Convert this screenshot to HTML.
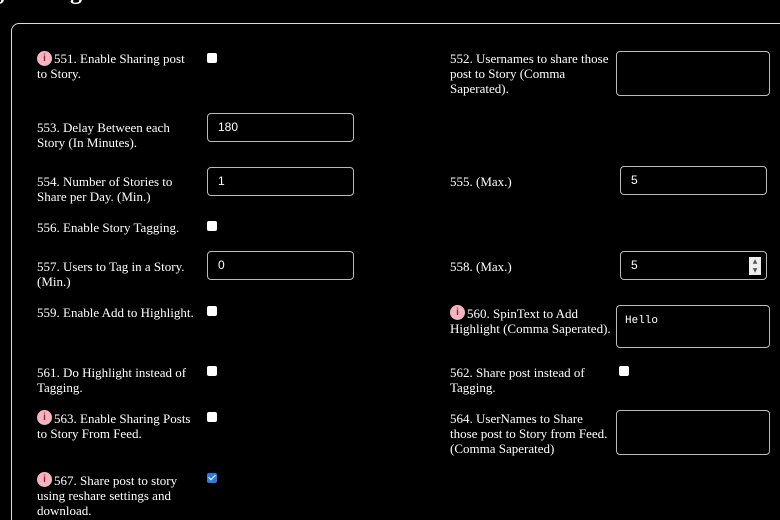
<!DOCTYPE html>
<html style="overflow:hidden;width:780px;height:520px"><head><style>
body{margin:0;width:780px;height:520px;background:#000;overflow:hidden;position:relative;font-family:"Liberation Serif",serif;font-size:13px;color:#fff;line-height:15px}
.a{position:absolute}
h2{position:absolute;left:-8px;top:-22px;margin:0;font-size:24px;font-weight:bold;line-height:28px}
.frame{position:absolute;left:11px;top:23px;width:790px;height:520px;border:1px solid #ddd;border-radius:8px}
.cb{position:absolute;width:10px;height:10px;background:#fff;border-radius:2px}
.cb.on{background:#2a7be4}
.cb.on::after{content:"";position:absolute;left:3px;top:0px;width:3px;height:6px;border:solid #fff;border-width:0 1.5px 1.5px 0;transform:rotate(45deg)}
.in{position:absolute;border:1px solid #bbb;border-radius:4px;box-sizing:border-box;font-family:"Liberation Sans",sans-serif;font-size:12px;padding:0 10px;line-height:27px}
.ta{position:absolute;border:1px solid #bbb;border-radius:4px;box-sizing:border-box;font-family:"Liberation Mono",monospace;font-size:11px;padding:8px 8px}
.i{position:absolute;width:15px;height:15px;border-radius:50%;background:#f4b4c0;color:#a0213a;font:bold 10px/15px "Liberation Sans",sans-serif;text-align:center;z-index:2}
.sp{position:absolute;right:5px;top:5px;width:12px;height:18px;background:#eee;color:#555;font-size:6px;line-height:9px;text-align:center;font-family:"DejaVu Sans",sans-serif}
</style></head><body>
<h2>g Settings</h2>
<div class="frame"></div>

<div class="i" style="left:37px;top:51px">i</div>
<div class="a" style="left:37px;top:51px;width:160px;text-indent:17px">551. Enable Sharing post to Story.</div>
<div class="cb" style="left:207px;top:53px"></div>
<div class="a" style="left:450px;top:51px;width:162px">552. Usernames to share those post to Story (Comma Saperated).</div>
<div class="ta" style="left:616px;top:51px;width:154px;height:45px"></div>

<div class="a" style="left:37px;top:120px;width:160px">553. Delay Between each Story (In Minutes).</div>
<div class="in" style="left:207px;top:113px;width:147px;height:29px">180</div>

<div class="a" style="left:37px;top:174px;width:160px">554. Number of Stories to Share per Day. (Min.)</div>
<div class="in" style="left:207px;top:167px;width:147px;height:29px">1</div>
<div class="a" style="left:450px;top:174px">555. (Max.)</div>
<div class="in" style="left:620px;top:166px;width:147px;height:29px">5</div>

<div class="a" style="left:37px;top:220px">556. Enable Story Tagging.</div>
<div class="cb" style="left:207px;top:221px"></div>

<div class="a" style="left:37px;top:259px;width:160px">557. Users to Tag in a Story. (Min.)</div>
<div class="in" style="left:207px;top:251px;width:147px;height:29px">0</div>
<div class="a" style="left:450px;top:259px">558. (Max.)</div>
<div class="in" style="left:620px;top:251px;width:147px;height:29px">5<div class="sp">▲<br>▼</div></div>

<div class="a" style="left:37px;top:305px">559. Enable Add to Highlight.</div>
<div class="cb" style="left:207px;top:306px"></div>
<div class="i" style="left:450px;top:305px">i</div>
<div class="a" style="left:450px;top:306px;width:162px;text-indent:17px">560. SpinText to Add Highlight (Comma Saperated).</div>
<div class="ta" style="left:616px;top:305px;width:154px;height:43px">Hello</div>

<div class="a" style="left:37px;top:365px;width:160px">561. Do Highlight instead of Tagging.</div>
<div class="cb" style="left:207px;top:366px"></div>
<div class="a" style="left:450px;top:365px;width:160px">562. Share post instead of Tagging.</div>
<div class="cb" style="left:619px;top:366px"></div>

<div class="i" style="left:37px;top:410px">i</div>
<div class="a" style="left:37px;top:411px;width:165px;text-indent:17px">563. Enable Sharing Posts to Story From Feed.</div>
<div class="cb" style="left:207px;top:412px"></div>
<div class="a" style="left:450px;top:411px;width:158px">564. UserNames to Share those post to Story from Feed. (Comma Saperated)</div>
<div class="ta" style="left:616px;top:410px;width:154px;height:45px"></div>

<div class="i" style="left:37px;top:472px">i</div>
<div class="a" style="left:37px;top:473px;width:150px;text-indent:17px">567. Share post to story using reshare settings and download.</div>
<div class="cb on" style="left:207px;top:473px"></div>
</body></html>
